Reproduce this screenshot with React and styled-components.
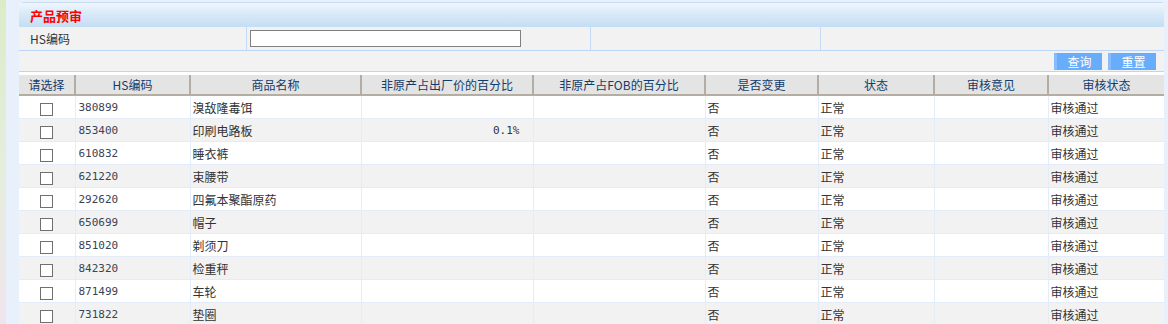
import React from "react";
import styled, { createGlobalStyle } from "styled-components";

const GlobalStyle = createGlobalStyle`
	html, body {
		margin: 0;
		padding: 0;
		height: 324px;
		overflow: hidden;
	}
	body {
		font-family: "SimSun", "Noto Sans CJK SC", "Liberation Sans", sans-serif;
		font-size: 12px;
		color: #333;
		background:
			linear-gradient(to bottom, #dcecc8 0, #e4eedc 50%, #f0e4ec 100%) left top / 6px 100% no-repeat,
			#e8f0fc;
	}
`;

const Page = styled.div`
	padding: 2px 4px 0 19px;
	height: 322px;
`;

const Panel = styled.div`
	background: #fff;
	border-top-left-radius: 5px;
	border-top-right-radius: 2px;
	overflow: hidden;
	height: 100%;
`;

const TitleBar = styled.div`
	height: 25px;
	display: flex;
	align-items: center;
	padding-left: 11px;
	background: linear-gradient(to bottom, #eef6fd 0%, #d9e9f8 45%, #c4def4 100%);
	border-top: 1px solid #c8dcf0;
	box-sizing: border-box;
`;

const Title = styled.span`
	color: #f00;
	font-weight: bold;
	font-size: 13px;
`;

const QueryRow = styled.div`
	display: grid;
	grid-template-columns: 227px 344px 230px 1fr;
	height: 23px;
	background: #f2f2f2;
	border-bottom: 1px solid #bcd6f8;
`;

const QueryCell = styled.div`
	display: flex;
	align-items: center;
	padding-left: ${(p) => (p.$pad ? "11px" : "3px")};
	border-left: ${(p) => (p.$first ? "none" : "1px solid #c4dcf8")};
`;

const TextInput = styled.input`
	width: 271px;
	height: 17px;
	box-sizing: border-box;
	border: 1px solid #808080;
	background: #fff;
	padding: 0;
	outline: none;
`;

const ButtonRow = styled.div`
	display: flex;
	justify-content: flex-end;
	align-items: center;
	gap: 6px;
	height: 20px;
	padding-right: 8px;
	background: #f2f2f2;
	border-bottom: 1px solid #bcd6f8;
	margin-bottom: 3px;
`;

const Button = styled.button`
	width: 48px;
	height: 17px;
	padding: 0;
	border: none;
	border-left: 3px solid #86bcfc;
	background: #68acfc;
	color: #fff;
	font-family: inherit;
	font-size: 12px;
	line-height: 17px;
	cursor: pointer;
`;

const Table = styled.table`
	width: 1145px;
	border-collapse: collapse;
	table-layout: fixed;
`;

const HeadCell = styled.th`
	height: 19px;
	padding: 0;
	background: #e4e4e4;
	color: #123c6c;
	font-weight: normal;
	text-align: center;
	line-height: 19px;
	border-left: 2px solid #b4ada2;
	border-bottom: 2px solid #b4ada2;
	&:first-child {
		border-left: none;
	}
`;

const Row = styled.tr`
	background: ${(p) => (p.$alt ? "#f2f2f2" : "#fff")};
`;

const Cell = styled.td`
	height: 22px;
	padding: 0 2px;
	border-left: 1px solid #e4ecfa;
	border-bottom: 1px solid #e4ecfa;
	text-align: ${(p) => p.$align || "left"};
	white-space: nowrap;
	&:first-child {
		border-left: none;
	}
`;

const Code = styled(Cell)`
	font-family: "DejaVu Sans Mono", "Liberation Mono", monospace;
	font-size: 11px;
	color: #3a4458;
	padding-left: 3px;
`;

const Num = styled(Cell)`
	font-family: "DejaVu Sans Mono", "Liberation Mono", monospace;
	font-size: 11px;
	padding-right: 13px;
`;

const Check = styled.span`
	display: inline-block;
	width: 11px;
	height: 11px;
	border: 1px solid #707070;
	background: #fff;
	vertical-align: middle;
`;

const columns = [
	["请选择", 56],
	["HS编码", 115],
	["商品名称", 171],
	["非原产占出厂价的百分比", 172],
	["非原产占FOB的百分比", 172],
	["是否变更", 113],
	["状态", 116],
	["审核意见", 114],
	["审核状态", 116],
];

const rows = [
	["380899", "溴敌隆毒饵", ""],
	["853400", "印刷电路板", "0.1%"],
	["610832", "睡衣裤", ""],
	["621220", "束腰带", ""],
	["292620", "四氟本聚酯原药", ""],
	["650699", "帽子", ""],
	["851020", "剃须刀", ""],
	["842320", "检重秤", ""],
	["871499", "车轮", ""],
	["731822", "垫圈", ""],
];

export default function App() {
	return (
		<>
			<GlobalStyle />
			<Page>
				<Panel>
					<TitleBar>
						<Title>产品预审</Title>
					</TitleBar>
					<QueryRow>
						<QueryCell $first $pad>HS编码</QueryCell>
						<QueryCell>
							<TextInput type="text" />
						</QueryCell>
						<QueryCell />
						<QueryCell />
					</QueryRow>
					<ButtonRow>
						<Button>查询</Button>
						<Button>重置</Button>
					</ButtonRow>
					<Table>
						<colgroup>
							{columns.map(([name, w]) => (
								<col key={name} style={{ width: w }} />
							))}
						</colgroup>
						<thead>
							<tr>
								{columns.map(([name]) => (
									<HeadCell key={name}>{name}</HeadCell>
								))}
							</tr>
						</thead>
						<tbody>
							{rows.map(([code, name, pct], i) => (
								<Row key={code} $alt={i % 2 === 1}>
									<Cell $align="center">
										<Check />
									</Cell>
									<Code>{code}</Code>
									<Cell>{name}</Cell>
									<Num $align="right">{pct}</Num>
									<Cell />
									<Cell>否</Cell>
									<Cell>正常</Cell>
									<Cell />
									<Cell>审核通过</Cell>
								</Row>
							))}
						</tbody>
					</Table>
				</Panel>
			</Page>
		</>
	);
}
